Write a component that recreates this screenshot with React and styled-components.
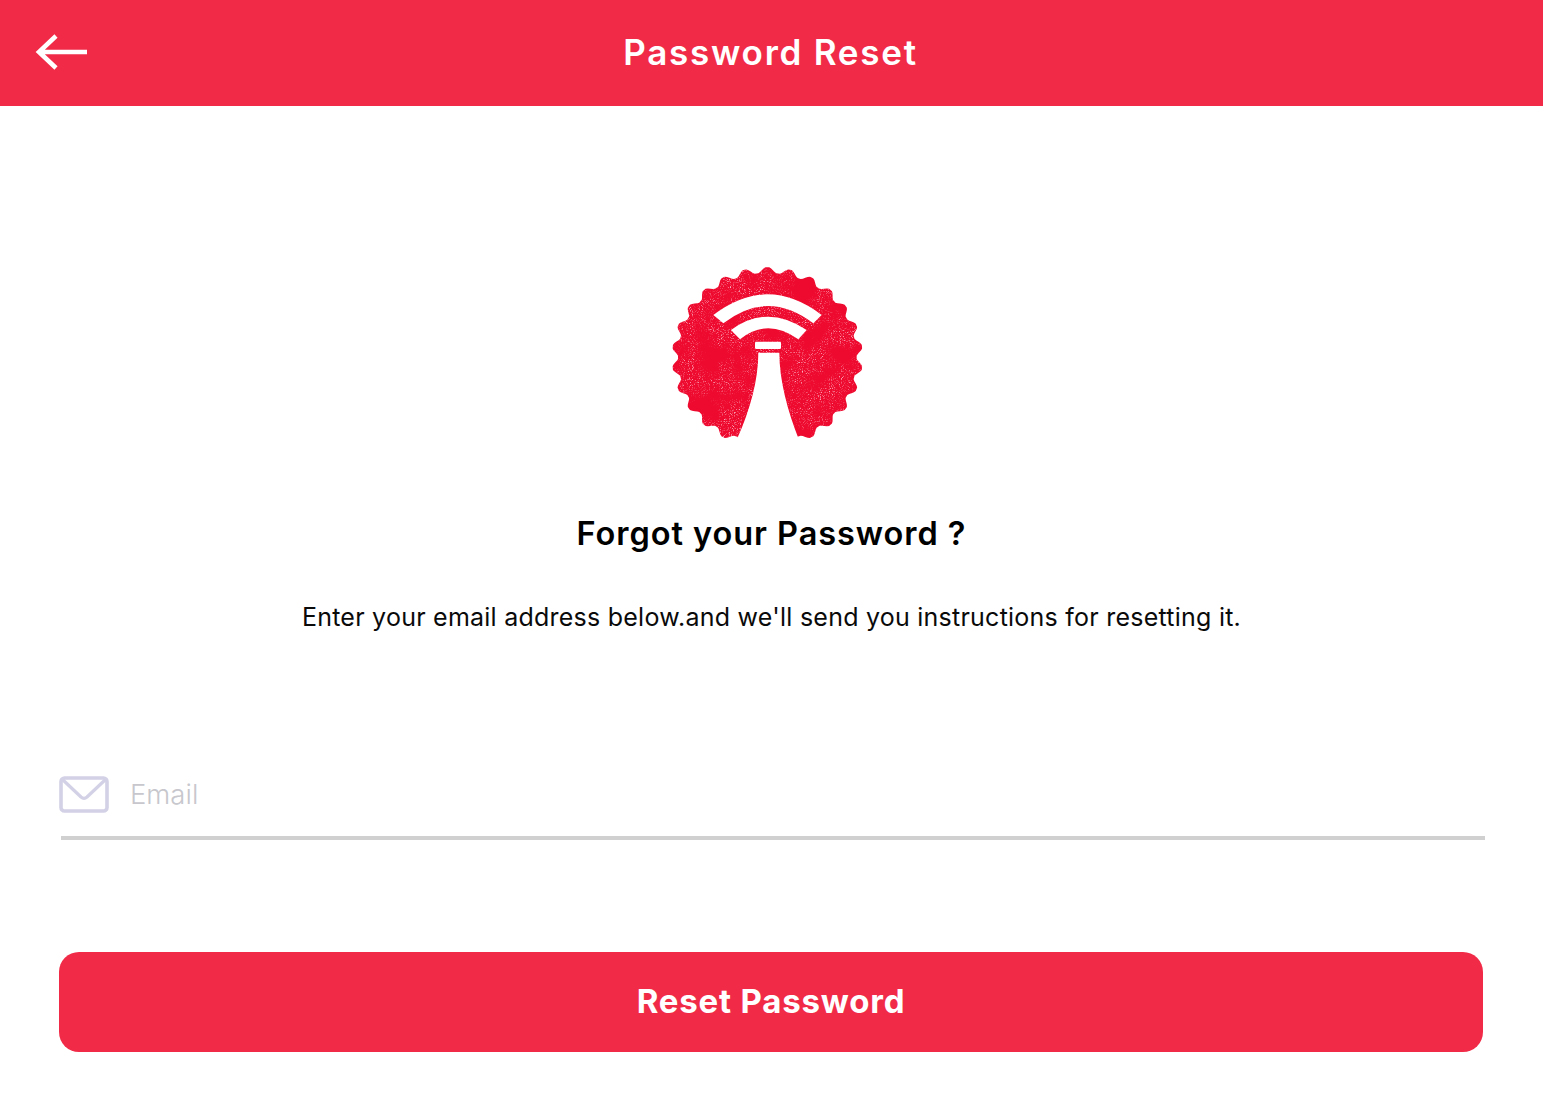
import React from "react";
import styled, { createGlobalStyle } from "styled-components";

const RED = "#f12b47";

const GlobalStyle = createGlobalStyle`
  html, body {
    margin: 0;
    padding: 0;
    background: #ffffff;
  }
  * {
    box-sizing: border-box;
  }
`;

// scalloped edge of the stamp, in the 720x600 space of the logo
const gearPath = () => {
  const teeth = 26;
  const steps = teeth * 12;
  let d = "";
  for (let i = 0; i < steps; i++) {
    const a = (i / steps) * Math.PI * 2;
    const wave = Math.max(-1, Math.min(1, 1.2 * Math.cos(a * teeth)));
    const r = 277 + 9 * wave;
    const x = 352 + r * Math.sin(a);
    const y = 322 - r * 0.945 * Math.cos(a);
    d += `${i === 0 ? "M" : "L"}${x.toFixed(1)} ${y.toFixed(1)} `;
  }
  return d + "Z";
};

const Logo = () => (
  <LogoSvg viewBox="0 0 720 600">
    <defs>
      <filter id="worn" x="0" y="0" width="100%" height="100%">
        <feTurbulence
          type="fractalNoise"
          baseFrequency="0.3"
          numOctaves="2"
          seed="7"
          result="fine"
        />
        <feColorMatrix
          in="fine"
          values="0 0 0 0 0.98  0 0 0 0 0.42  0 0 0 0 0.52  2.6 2.6 0 0 -2.72"
          result="grain"
        />
        <feTurbulence
          type="fractalNoise"
          baseFrequency="0.014"
          numOctaves="3"
          seed="11"
          result="coarse"
        />
        <feColorMatrix
          in="coarse"
          values="0 0 0 0 1  0 0 0 0 1  0 0 0 0 1  3.4 0 0 0 -1.15"
          result="patches"
        />
        <feComposite in="grain" in2="patches" operator="in" />
      </filter>
      <clipPath id="stamp">
        <path d={gearPath()} />
      </clipPath>
    </defs>
    <g clipPath="url(#stamp)">
      <rect width="720" height="600" fill="#ee0a2e" />
      <rect width="720" height="600" filter="url(#worn)" />
    </g>
    <path
      d="M190 195 Q352 71 515 195 L490 220 Q352 116 220 220 Z"
      fill="#fff"
    />
    <path
      d="M243 240 Q352 160 470 240 L445 268 Q352 202 270 268 Z"
      fill="#fff"
    />
    <rect x="315" y="275" width="78" height="22" rx="4" fill="#fff" />
    <path
      d="M325 308 L388 308 C388 390 412 480 448 572 L455 600 L255 600 L262 565 C300 480 325 390 325 308 Z"
      fill="#fff"
    />
  </LogoSvg>
);

const BackArrow = () => (
  <ArrowSvg viewBox="0 0 54 38">
    <path
      d="M53 19H5M22 3L5 19l17 16"
      fill="none"
      stroke="#fff"
      strokeWidth="4.6"
      strokeLinejoin="miter"
    />
  </ArrowSvg>
);

const MailIcon = () => (
  <MailSvg viewBox="0 0 50 37">
    <rect
      x="2"
      y="2"
      width="46"
      height="33"
      rx="3.5"
      fill="none"
      stroke="#d3d1e6"
      strokeWidth="3.6"
    />
    <path
      d="M4 4l18 17c1.8 1.6 4.2 1.6 6 0L46 4"
      fill="none"
      stroke="#d3d1e6"
      strokeWidth="3.2"
    />
  </MailSvg>
);

const App = () => {
  return (
    <Page>
      <GlobalStyle />
      <Header>
        <BackButton aria-label="Back">
          <BackArrow />
        </BackButton>
        <Title>Password Reset</Title>
      </Header>
      <Content>
        <Logo />
        <Heading>Forgot your Password ?</Heading>
        <Message>
          Enter your email address below.and we'll send you instructions for
          resetting it.
        </Message>
        <Field>
          <MailIcon />
          <EmailInput type="email" placeholder="Email" />
        </Field>
        <ResetButton>Reset Password</ResetButton>
      </Content>
    </Page>
  );
};

const Page = styled.div`
  min-height: 1113px;
  background: #fff;
  font-family: "Inter", "Liberation Sans", sans-serif;
`;

const Header = styled.header`
  position: relative;
  height: 106px;
  background: ${RED};
  display: flex;
  align-items: center;
  justify-content: center;
`;

const BackButton = styled.button`
  position: absolute;
  left: 34px;
  top: 33px;
  padding: 0;
  border: 0;
  background: none;
  display: flex;
`;

const ArrowSvg = styled.svg`
  width: 54px;
  height: 38px;
`;

const Title = styled.h1`
  margin: 0 0 2px -2px;
  color: #fff;
  font-size: 35px;
  font-weight: 600;
  letter-spacing: 1.75px;
  line-height: 42px;
`;

const Content = styled.main`
  display: flex;
  flex-direction: column;
  align-items: center;
  padding: 144px 59px 0;
`;

const LogoSvg = styled.svg`
  width: 240px;
  height: 200px;
  margin-left: -3px;
  display: block;
`;

const Heading = styled.h2`
  margin: 62px 0 0;
  color: #000;
  font-size: 32.5px;
  font-weight: 600;
  letter-spacing: 0.95px;
  line-height: 44px;
`;

const Message = styled.p`
  margin: 46px 0 0;
  color: #0a0a0a;
  font-size: 25px;
  font-weight: 400;
  letter-spacing: 0.24px;
  line-height: 31px;
`;

const Field = styled.label`
  align-self: stretch;
  margin: 127px -1px 0 2px;
  height: 80px;
  padding-bottom: 8px;
  border-bottom: 4px solid #d0d0d0;
  display: flex;
  align-items: center;
  gap: 21px;
`;

const MailSvg = styled.svg`
  width: 50px;
  height: 37px;
  margin-left: -2px;
  flex: none;
`;

const EmailInput = styled.input`
  flex: 1;
  padding: 0;
  border: 0;
  outline: 0;
  background: transparent;
  font-family: "Inter", "Liberation Sans", sans-serif;
  font-size: 27.5px;
  font-weight: 300;
  color: #333;
  &::placeholder {
    color: #c7c7cd;
    opacity: 1;
  }
`;

const ResetButton = styled.button`
  align-self: stretch;
  margin: 112px 1px 0 0;
  height: 100px;
  padding: 0 0 2px;
  border: 0;
  border-radius: 20px;
  background: ${RED};
  color: #fff;
  font-family: "Inter", "Liberation Sans", sans-serif;
  font-size: 33px;
  font-weight: 700;
  letter-spacing: 0.8px;
`;

export default App;
